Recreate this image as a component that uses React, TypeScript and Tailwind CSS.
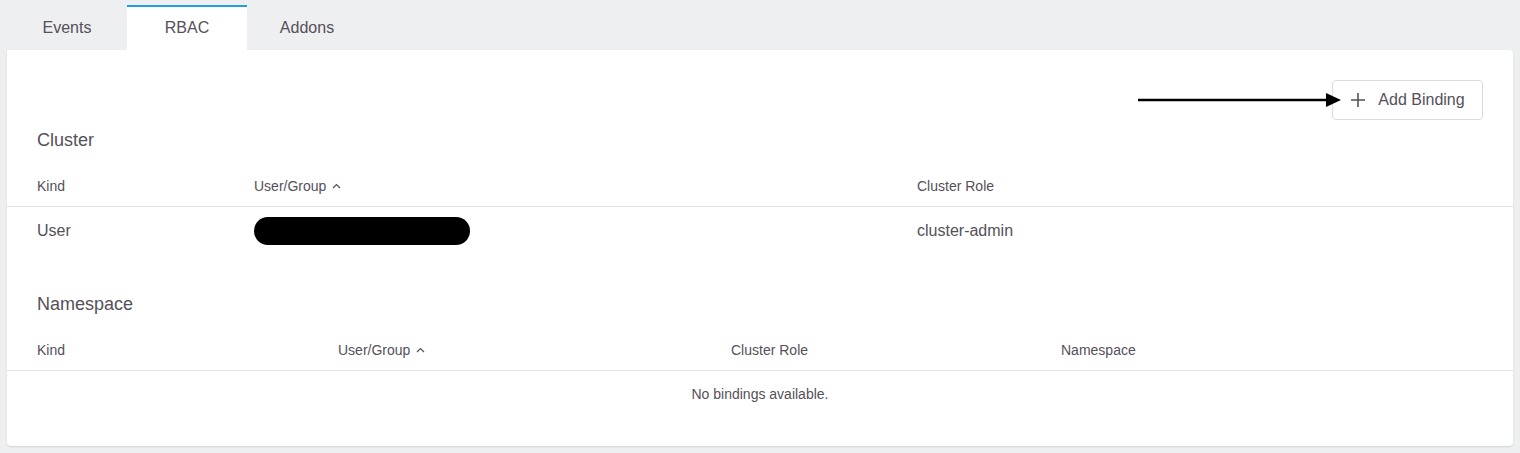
function SortCaret() {
  return (
    <svg width="9" height="6" viewBox="0 0 9 6" className="mb-[2px]">
      <path d="M1 5 L4.5 1.5 L8 5" fill="none" stroke="#55505a" strokeWidth="1.2" />
    </svg>
  )
}

export default function App() {
  return (
    <div className="relative h-[453px] w-[1520px] bg-[#eeeff1] font-['Liberation_Sans',Arial,sans-serif] text-[#55505a]">
      {/* tabs */}
      <div className="flex h-[50px] items-end pl-[7px]">
        <div className="flex h-[45px] w-[120px] items-center justify-center text-[16px]">Events</div>
        <div className="flex h-[45px] w-[120px] items-center justify-center border-t-2 border-[#1d9fe2] bg-white pb-[1px] text-[16px]">
          RBAC
        </div>
        <div className="flex h-[45px] w-[120px] items-center justify-center text-[16px]">Addons</div>
      </div>

      {/* card */}
      <div className="mx-[7px] h-[396px] rounded-b-[4px] rounded-tr-[4px] bg-white shadow-[0_1px_2px_rgba(0,0,0,0.12)]">
        <div className="flex justify-end pr-[30px] pt-[30px]">
          <button className="flex h-[40px] w-[151px] items-center justify-center gap-[12px] rounded-[4px] border border-[#dcdcdf] bg-white text-[16px] text-[#55505a]">
            <svg width="16" height="16" viewBox="0 0 16 16" className="stroke-[#55505a]">
              <path d="M8 1v14M1 8h14" strokeWidth="1.6" fill="none" />
            </svg>
            Add Binding
          </button>
        </div>

        <h3 className="mt-[8px] pl-[30px] text-[18px] leading-[24px]">Cluster</h3>
        <div className="mt-[15px] grid h-[40px] grid-cols-[217px_663px_1fr] items-center border-b border-[#e3e3e5] pl-[30px] text-[14px]">
          <div>Kind</div>
          <div className="flex items-center gap-[6px]">
            User/Group
            <SortCaret />
          </div>
          <div>Cluster Role</div>
        </div>
        <div className="grid h-[47px] grid-cols-[217px_663px_1fr] items-center pl-[30px] text-[16px]">
          <div>User</div>
          <div>
            <div className="h-[28px] w-[216px] rounded-full bg-black" />
          </div>
          <div>cluster-admin</div>
        </div>

        <h3 className="mt-[38px] pl-[30px] text-[18px] leading-[24px]">Namespace</h3>
        <div className="mt-[15px] grid h-[40px] grid-cols-[301px_393px_330px_1fr] items-center border-b border-[#e3e3e5] pl-[30px] text-[14px]">
          <div>Kind</div>
          <div className="flex items-center gap-[6px]">
            User/Group
            <SortCaret />
          </div>
          <div>Cluster Role</div>
          <div>Namespace</div>
        </div>
        <div className="flex h-[46px] items-center justify-center text-[14px]">No bindings available.</div>
      </div>

      {/* annotation arrow */}
      <svg className="absolute left-[1136px] top-[90px]" width="210" height="20" viewBox="0 0 210 20">
        <line x1="2" y1="10" x2="192" y2="10" stroke="#000" strokeWidth="2.5" />
        <path d="M190 3 L205 10 L190 17 Z" fill="#000" />
      </svg>
    </div>
  )
}
